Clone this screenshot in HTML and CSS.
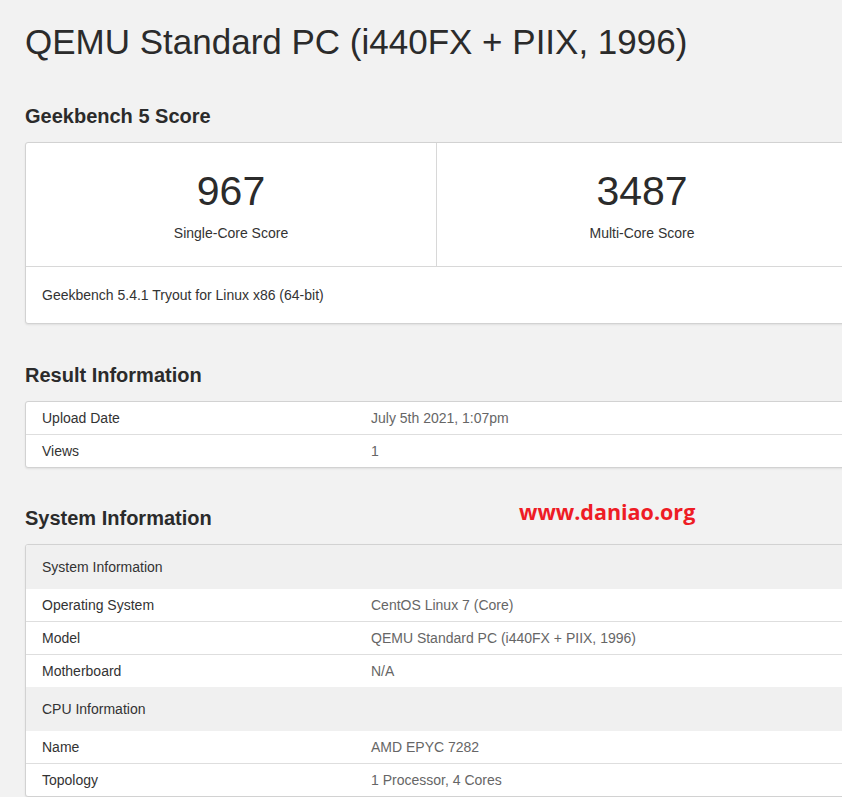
FILE: index.html
```html
<!DOCTYPE html>
<html>
<head>
<meta charset="utf-8">
<link rel="stylesheet" href="styles.css">
</head>
<body>
<div class="page">
  <h1 class="title">QEMU Standard PC (i440FX + PIIX, 1996)</h1>

  <h2 class="section-title first">Geekbench 5 Score</h2>
  <div class="card">
    <div class="scores">
      <div class="score">
        <div class="score-value">967</div>
        <div class="score-label">Single-Core Score</div>
      </div>
      <div class="score">
        <div class="score-value">3487</div>
        <div class="score-label">Multi-Core Score</div>
      </div>
    </div>
    <div class="card-footer">Geekbench 5.4.1 Tryout for Linux x86 (64-bit)</div>
  </div>

  <h2 class="section-title">Result Information</h2>
  <div class="card">
    <div class="row"><div class="label">Upload Date</div><div class="value">July 5th 2021, 1:07pm</div></div>
    <div class="row"><div class="label">Views</div><div class="value">1</div></div>
  </div>

  <h2 class="section-title tight">System Information</h2>
  <div class="card">
    <div class="row head"><div class="label">System Information</div></div>
    <div class="row"><div class="label">Operating System</div><div class="value">CentOS Linux 7 (Core)</div></div>
    <div class="row"><div class="label">Model</div><div class="value">QEMU Standard PC (i440FX + PIIX, 1996)</div></div>
    <div class="row"><div class="label">Motherboard</div><div class="value">N/A</div></div>
    <div class="row head"><div class="label">CPU Information</div></div>
    <div class="row"><div class="label">Name</div><div class="value">AMD EPYC 7282</div></div>
    <div class="row"><div class="label">Topology</div><div class="value">1 Processor, 4 Cores</div></div>
  </div>
</div>
<div class="watermark">www.daniao.org</div>
</body>
</html>
```
FILE: styles.css
```css
html, body {
  margin: 0;
  padding: 0;
  background: #f2f2f2;
  overflow: hidden;
}
body {
  font-family: "Liberation Sans", Arial, sans-serif;
  color: #333;
  font-size: 14px;
  width: 842px;
  height: 797px;
  position: relative;
}
.page {
  padding-left: 25px;
  width: 823px;
}
.title {
  margin: 0;
  padding-top: 22px;
  font-size: 35px;
  font-weight: normal;
  line-height: 40px;
  color: #2b2b2b;
}
.section-title {
  margin: 0;
  font-size: 20px;
  font-weight: bold;
  line-height: 24px;
  color: #2b2b2b;
  padding-top: 39px;
  padding-bottom: 14px;
}
.section-title.first {
  padding-top: 42px;
  padding-bottom: 14px;
}
.section-title.tight {
  padding-top: 38px;
}
.card {
  background: #fff;
  border: 1px solid #d2d2d2;
  border-radius: 3px;
  box-shadow: 0 1px 2px rgba(0,0,0,0.08);
  overflow: hidden;
}
.scores {
  display: flex;
  height: 123px;
  border-bottom: 1px solid #d8d8d8;
}
.score {
  flex: 1;
  text-align: center;
  padding-top: 24px;
}
.score + .score {
  border-left: 1px solid #d8d8d8;
}
.score-value {
  font-size: 41px;
  line-height: 48px;
  color: #2b2b2b;
}
.score-label {
  margin-top: 10px;
  font-size: 14px;
  color: #333;
}
.card-footer {
  height: 56px;
  display: flex;
  align-items: center;
  padding-left: 16px;
  font-size: 14px;
  color: #333;
}
.row {
  display: flex;
  height: 32px;
  align-items: center;
}
.row:not(.head) + .row:not(.head) {
  border-top: 1px solid #dedede;
}
.row.head {
  background: #f0f0f0;
  height: 44px;
}
.label {
  width: 329px;
  padding-left: 16px;
  color: #333;
}
.value {
  color: #666;
}
.watermark {
  position: absolute;
  left: 519px;
  top: 497px;
  font-family: "Open Sans", "Noto Sans", sans-serif;
  font-weight: bold;
  font-size: 21.5px;
  color: #ee1c25;
}
```
